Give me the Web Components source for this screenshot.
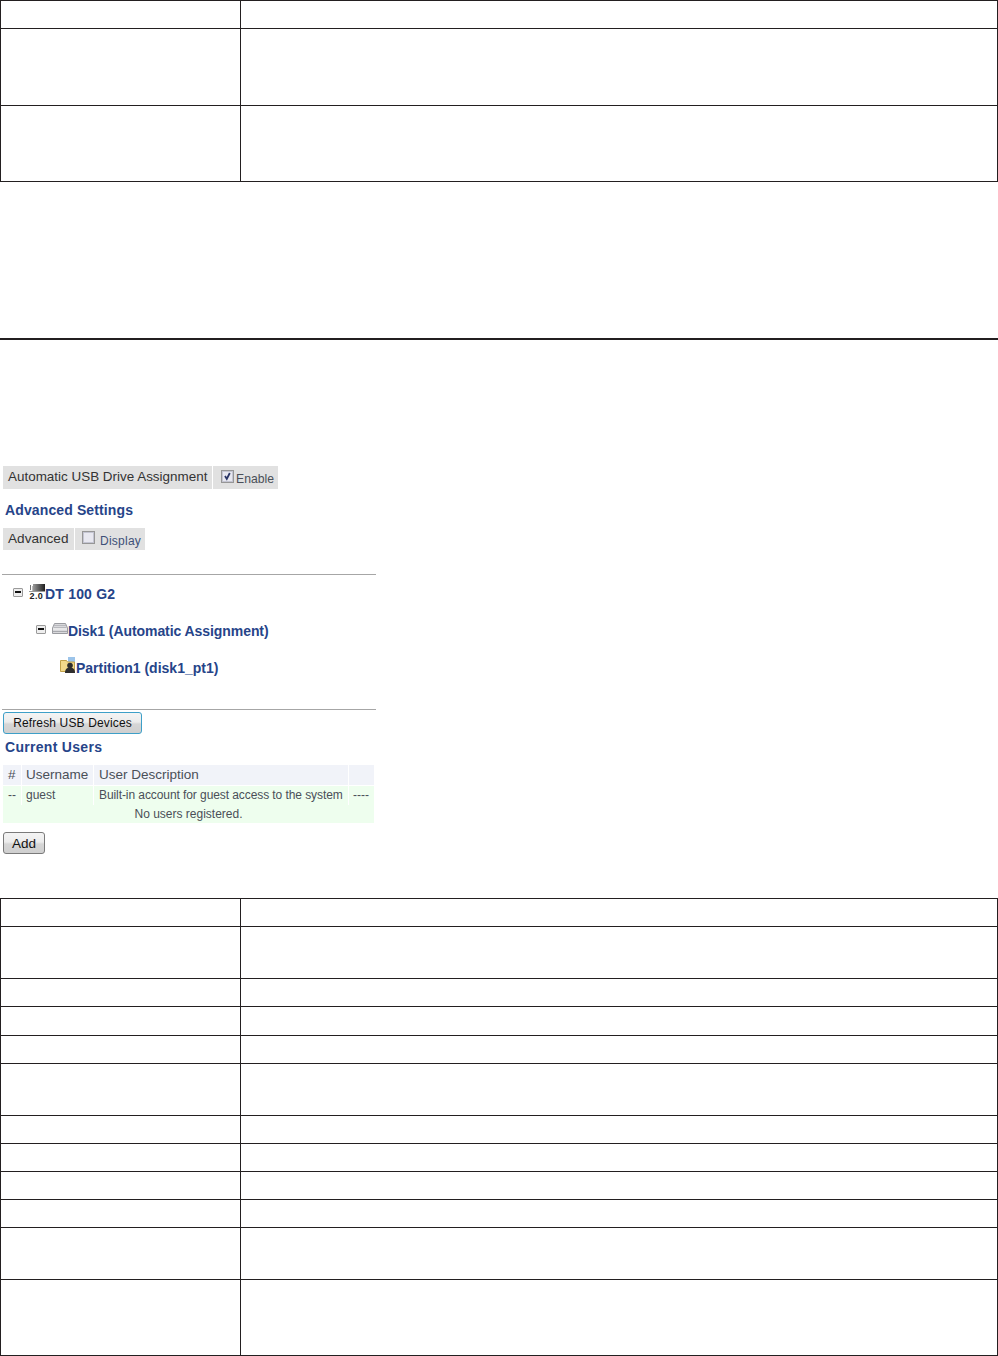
<!DOCTYPE html>
<html>
<head>
<meta charset="utf-8">
<title>USB settings</title>
<style>
    html, body { margin: 0; padding: 0; background: #fff; }
    body { font-family: "Liberation Sans", Arial, sans-serif; width: 998px; height: 1356px; overflow: hidden; }
</style>
</head>
<body>
<doc-page>
    <ledger-table>
        <ledger-row style="--h:28px"></ledger-row>
        <ledger-row style="--h:77px"></ledger-row>
        <ledger-row style="--h:76px"></ledger-row>
    </ledger-table>

    <usb-panel slot="panel">
        <chip-row style="--h:23px">
            <setting-chip style="--w:209px;--pad:5px;--dy:-1px;--fs:13.45px">Automatic USB Drive Assignment</setting-chip>
            <check-chip checked style="--w:65px;--box:8px;--gap:2px;--color:#4a4f58;--fs:12.2px">Enable</check-chip>
        </chip-row>
        <section-heading style="--before:11px;--after:8px;--ls:.12px">Advanced Settings</section-heading>
        <chip-row style="--h:22px">
            <setting-chip style="--w:71px;--pad:5px;--dy:-1px;--fs:13.6px">Advanced</setting-chip>
            <check-chip style="--w:70px;--box:7px;--gap:5px;--color:#3e5078;--fs:12px;--ls:.25px">Display</check-chip>
        </chip-row>
        <panel-rule style="--before:24px"></panel-rule>

        <tree-node style="--indent:11px;--ls:.2px" toggle>
            <svg slot="icon" style="margin-top:-3px" width="16" height="17" viewBox="0 0 16 17">
                <defs>
                    <linearGradient id="usb-body" x1="0" x2="1" y1="0" y2="0">
                        <stop offset="0" stop-color="#9a9a9a"/>
                        <stop offset="1" stop-color="#1e1e1e"/>
                    </linearGradient>
                </defs>
                <rect x="1" y="1" width="1" height="5" fill="#777"/>
                <rect x="3" y="2" width="1" height="5" fill="#bbb"/>
                <rect x="4" y="0" width="12" height="7" fill="url(#usb-body)"/>
                <rect x="0" y="7" width="16" height="1" fill="#9a9a9a"/>
                <text x="0.5" y="15" font-family="Liberation Sans, sans-serif" font-size="9" font-weight="700" fill="#222" letter-spacing=".4">2.0</text>
            </svg>
            DT 100 G2
        </tree-node>
        <tree-node style="--indent:34px;--ls:-.07px" toggle>
            <svg slot="icon" width="16" height="11" viewBox="0 0 16 11">
                <path d="M2.500.5h11l2 4.500v5.500H.5V5z" fill="#d9d9dc" stroke="#9a9ba0"/>
                <path d="M2 2.500h12M1.500 4.500h13" stroke="#b8b9be"/>
                <path d="M1 6h14" stroke="#f6f6f6"/>
                <path d="M1 8.500h14" stroke="#a8a9ae"/>
            </svg>
            Disk1 (Automatic Assignment)
        </tree-node>
        <tree-node style="--indent:58px">
            <svg slot="icon" width="16" height="17" viewBox="0 0 16 17">
                <rect x="8" y="0" width="7" height="5" fill="#9cc4ea"/>
                <path d="M.5 3.500h6l1 1.500h7v9.500H.5z" fill="#f2d98a" stroke="#c0a048"/>
                <circle cx="10" cy="8.500" r="2.800" fill="#2e2e2e"/>
                <path d="M5 16c0-4 2-5.500 5-5.500s5 1.500 5 5.500z" fill="#2e2e2e"/>
            </svg>
            Partition1 (disk1_pt1)
        </tree-node>

        <panel-rule style="--before:23px"></panel-rule>
        <panel-button focused style="--before:2px;--w:139px;--h:22px;--fs:12px;--ls:.14px">Refresh USB Devices</panel-button>
        <section-heading style="--before:3px;--after:8px;--ls:.3px">Current Users</section-heading>
        <users-table>
            <users-row head><span>#</span><span>Username</span><span>User Description</span><span></span></users-row>
            <users-row><span>--</span><span>guest</span><span>Built-in account for guest access to the system</span><span>----</span></users-row>
            <users-row wide><span>No users registered.</span></users-row>
        </users-table>
        <panel-button style="--before:9px;--w:42px;--h:22px;--fs:13.5px">Add</panel-button>
    </usb-panel>

    <ledger-table slot="after">
        <ledger-row style="--h:28px"></ledger-row>
        <ledger-row style="--h:52px"></ledger-row>
        <ledger-row style="--h:28px"></ledger-row>
        <ledger-row style="--h:29px"></ledger-row>
        <ledger-row style="--h:28px"></ledger-row>
        <ledger-row style="--h:52px"></ledger-row>
        <ledger-row style="--h:28px"></ledger-row>
        <ledger-row style="--h:28px"></ledger-row>
        <ledger-row style="--h:28px"></ledger-row>
        <ledger-row style="--h:28px"></ledger-row>
        <ledger-row style="--h:52px"></ledger-row>
        <ledger-row style="--h:76px"></ledger-row>
    </ledger-table>
</doc-page>

<script>
function shadow(el, html) {
    el.attachShadow({mode: 'open'}).innerHTML = html;
}

class DocPage extends HTMLElement {
    constructor() {
        super();
        shadow(this, `
        <style>
            :host { display: block; width: 998px; }
            .rule { height: 2px; background: #231f20; margin-top: 156px; }
            .panel { margin-top: 126px; }
            .after { margin-top: 44px; }
        </style>
        <slot></slot>
        <div class="rule"></div>
        <div class="panel"><slot name="panel"></slot></div>
        <div class="after"><slot name="after"></slot></div>
        `);
    }
}

class LedgerTable extends HTMLElement {
    constructor() {
        super();
        shadow(this, `
        <style>
            :host { display: block; width: 998px; box-sizing: border-box;
                border: solid #231f20; border-width: 1px 1px 0 1px; }
        </style>
        <slot></slot>
        `);
    }
}

class LedgerRow extends HTMLElement {
    constructor() {
        super();
        shadow(this, `
        <style>
            :host { display: grid; grid-template-columns: 240px 1fr; box-sizing: border-box;
                height: var(--h); border-bottom: 1px solid #231f20; }
            .label { border-right: 1px solid #231f20; }
        </style>
        <div class="label"><slot name="label"></slot></div>
        <div><slot></slot></div>
        `);
    }
}

class UsbPanel extends HTMLElement {
    constructor() {
        super();
        shadow(this, `
        <style>
            :host { display: block; width: 374px; margin-left: 2px;
                font: 14px "Liberation Sans", Arial, sans-serif; color: #333; }
        </style>
        <slot></slot>
        `);
    }
}

class ChipRow extends HTMLElement {
    constructor() {
        super();
        shadow(this, `
        <style>
            :host { display: flex; gap: 1px; height: var(--h); margin-left: 1px; }
        </style>
        <slot></slot>
        `);
    }
}

class SettingChip extends HTMLElement {
    constructor() {
        super();
        shadow(this, `
        <style>
            :host { display: flex; align-items: center; box-sizing: border-box; width: var(--w);
                padding-left: var(--pad); background: #e1e1e1; color: #333;
                font-size: var(--fs); white-space: nowrap; }
            span { transform: translateY(var(--dy, 0)); }
        </style>
        <span><slot></slot></span>
        `);
    }
}

class CheckChip extends HTMLElement {
    constructor() {
        super();
        const tick = this.hasAttribute('checked')
            ? '<path d="M4 6l1.800 3L8.800 3" fill="none" stroke="#2a3566" stroke-width="1.800"/>'
            : '';
        shadow(this, `
        <style>
            :host { display: flex; align-items: center; gap: var(--gap); box-sizing: border-box;
                width: var(--w); padding-left: var(--box); background: #e1e1e1;
                color: var(--color); font-size: var(--fs); letter-spacing: var(--ls, 0); white-space: nowrap; }
            svg { flex: none; margin-top: -3px; }
            span { margin-top: 3px; }
        </style>
        <svg width="13" height="13" viewBox="0 0 13 13">
            <rect x=".5" y=".5" width="12" height="12" fill="#dcdde8" stroke="#969696"/>
            <rect x="1.500" y="1.500" width="10" height="10" fill="#e8e8f0" stroke="#c4c5d2"/>
            ${tick}
        </svg>
        <span><slot></slot></span>
        `);
    }
}

class SectionHeading extends HTMLElement {
    constructor() {
        super();
        shadow(this, `
        <style>
            :host { display: block; margin: var(--before) 0 var(--after) 3px; height: 20px; line-height: 20px;
                font-size: 14px; font-weight: 700; letter-spacing: var(--ls, 0); color: #264489; }
        </style>
        <slot></slot>
        `);
    }
}

class PanelRule extends HTMLElement {
    constructor() {
        super();
        shadow(this, `
        <style>
            :host { display: block; height: 1px; margin-top: var(--before); background: #a6a6a6; }
        </style>
        `);
    }
}

class TreeNode extends HTMLElement {
    constructor() {
        super();
        const toggle = this.hasAttribute('toggle') ? '<i class="toggle"></i>' : '';
        shadow(this, `
        <style>
            :host { display: flex; align-items: center; height: 37px; box-sizing: border-box;
                padding-left: var(--indent); font-size: 14px; font-weight: 700; letter-spacing: var(--ls, 0);
                color: #264489; white-space: nowrap; }
            .toggle { display: block; position: relative; box-sizing: border-box; width: 10px; height: 9px;
                margin-right: 6px; border: 1px solid #9a9a9a; border-radius: 1px; background: #eee; margin-top: -3px; }
            .toggle::after { content: ""; position: absolute; left: 1px; right: 1px; top: 2px; height: 2px; background: #111; }
            ::slotted(svg) { flex: none; margin-top: -4px; }
        </style>
        ${toggle}<slot name="icon"></slot><span><slot></slot></span>
        `);
    }
}

class PanelButton extends HTMLElement {
    constructor() {
        super();
        const edge = this.hasAttribute('focused') ? '#3d9fc8' : '#7a7a7a';
        shadow(this, `
        <style>
            :host { display: flex; align-items: center; justify-content: center; box-sizing: border-box;
                width: var(--w); height: var(--h); margin: var(--before) 0 0 1px;
                border: 1px solid ${edge}; border-radius: 3px;
                background: linear-gradient(#f4f4f4 0%, #ececec 45%, #d6d6d6 55%, #cfcfcf 100%);
                font-size: var(--fs); letter-spacing: var(--ls, 0); color: #111; }
        </style>
        <slot></slot>
        `);
    }
}

class UsersTable extends HTMLElement {
    constructor() {
        super();
        shadow(this, `
        <style>
            :host { display: block; width: 371px; margin-left: 1px; }
        </style>
        <slot></slot>
        `);
    }
}

class UsersRow extends HTMLElement {
    constructor() {
        super();
        shadow(this, `
        <style>
            :host { display: grid; grid-template-columns: 18px 71px 254px 25px; column-gap: 1px;
                height: 19px; font-size: 12px; color: #4a4f58; }
            :host([head]) { height: 20px; margin-bottom: 1px; font-size: 13.500px; }
            :host([wide]) { display: block; height: 18px; }
            ::slotted(span) { display: block; padding: 0 5px; background: #eefeee; line-height: 18px; white-space: nowrap; overflow: hidden; }
            ::slotted(span:nth-child(even)) { padding: 0 4px; }
            :host([head]) ::slotted(span) { background: #f1f3f9; line-height: 19px; }
            ::slotted(span:nth-child(3)) { letter-spacing: -.08px; }
            :host([head]) ::slotted(span:nth-child(3)) { letter-spacing: 0; }
            :host([wide]) ::slotted(span) { text-align: center; height: 18px; line-height: 19px; }
        </style>
        <slot></slot>
        `);
    }
}

customElements.define('doc-page', DocPage);
customElements.define('ledger-table', LedgerTable);
customElements.define('ledger-row', LedgerRow);
customElements.define('usb-panel', UsbPanel);
customElements.define('chip-row', ChipRow);
customElements.define('setting-chip', SettingChip);
customElements.define('check-chip', CheckChip);
customElements.define('section-heading', SectionHeading);
customElements.define('panel-rule', PanelRule);
customElements.define('tree-node', TreeNode);
customElements.define('panel-button', PanelButton);
customElements.define('users-table', UsersTable);
customElements.define('users-row', UsersRow);
</script>
</body>
</html>
